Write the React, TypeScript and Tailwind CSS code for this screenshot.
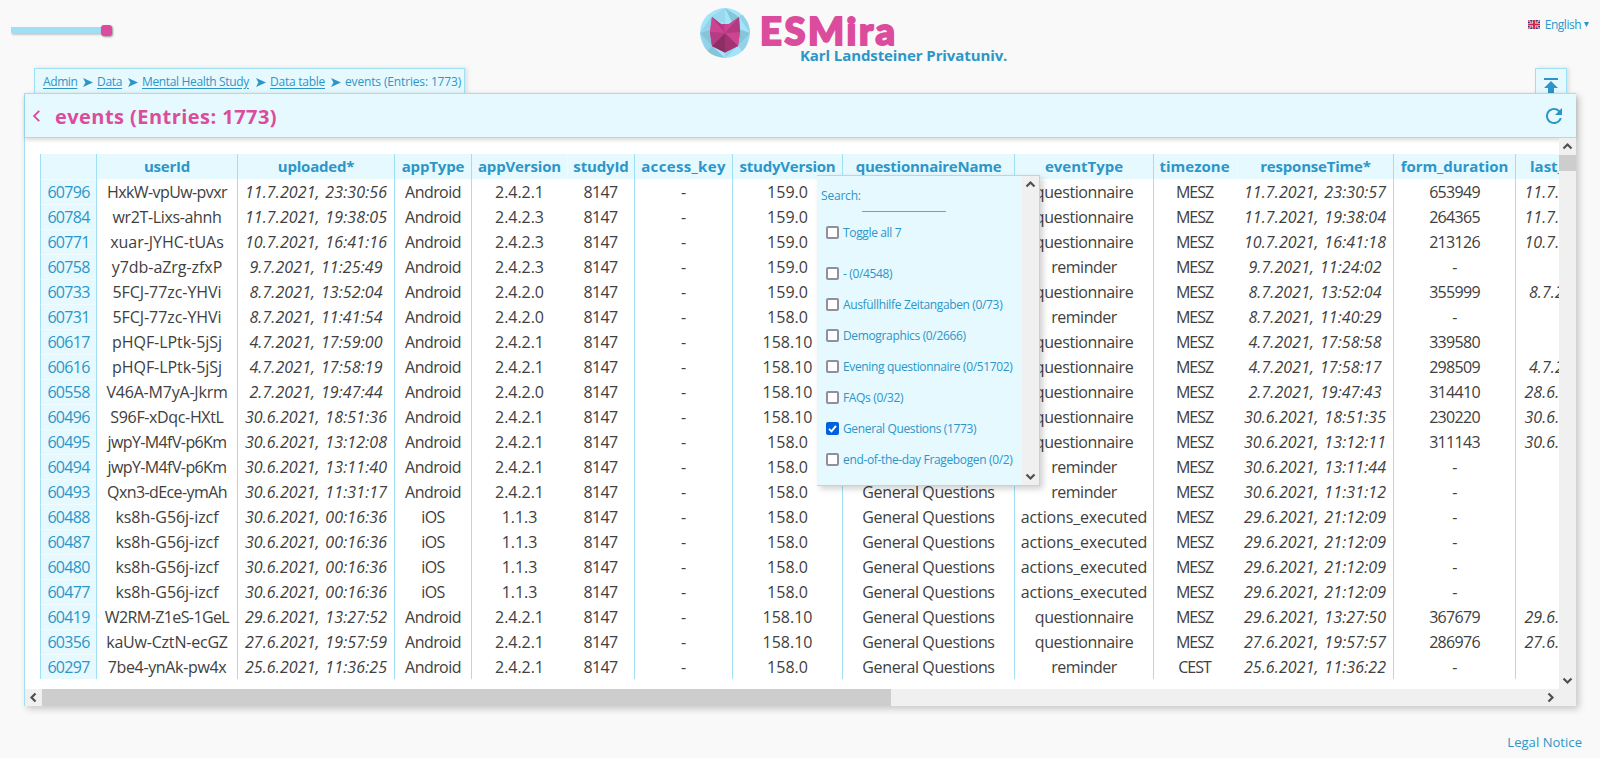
import React from "react";
import { MdRefresh } from "react-icons/md";

type Row = {
  id: string;
  user: string;
  track: string;
  uploaded: string;
  app: string;
  version: string;
  study: string;
  event: string;
  zone: string;
  response: string;
  duration: string;
  last: string;
};

const heads = [
  { name: "", w: "w-[56px]", line: true, cls: "" },
  { name: "userId", w: "w-[141px]", line: true, cls: "text-center tracking-[-0.2px]" },
  { name: "uploaded*", w: "w-[157px]", line: true, cls: "text-center tracking-[-0.2px]" },
  { name: "appType", w: "w-[77px]", line: true, cls: "text-center tracking-[-0.15px]" },
  { name: "appVersion", w: "w-[96px]", line: true, cls: "text-center tracking-[-0.15px]" },
  { name: "studyId", w: "w-[67px]", line: false, cls: "text-center tracking-[-0.15px]" },
  { name: "access_key", w: "w-[98px]", line: true, cls: "text-center tracking-[0.35px]" },
  { name: "studyVersion", w: "w-[110px]", line: true, cls: "text-center tracking-[-0.2px]" },
  { name: "questionnaireName", w: "w-[172px]", line: true, cls: "text-center tracking-[-0.25px]" },
  { name: "eventType", w: "w-[139px]", line: true, cls: "text-center tracking-[0px]" },
  { name: "timezone", w: "w-[84px]", line: true, cls: "text-center tracking-[0px] pr-0.5" },
  { name: "responseTime*", w: "w-[156px]", line: false, cls: "text-center tracking-[-0.2px]" },
  { name: "form_duration", w: "w-[122px]", line: true, cls: "text-center tracking-[-0.05px]" },
  { name: "last_invitation", w: "w-[160px]", line: true, cls: "text-left pl-[14px] tracking-[0px]" },
];

const T0 = "tracking-[-0.05px]";
const T2 = "tracking-[-0.2px]";
const T3 = "tracking-[-0.35px]";
const T6 = "tracking-[-0.6px]";

const A = "Android";
const Q = "questionnaire";
const R = "reminder";
const X = "actions_executed";

const row = (
  id: string, user: string, track: string, uploaded: string, app: string, version: string,
  study: string, event: string, response: string, duration: string, last: string, zone = "MESZ",
): Row => ({ id, user, track, uploaded, app, version, study, event, zone, response, duration, last });

const rows: Row[] = [
  row("60796", "HxkW-vpUw-pvxr", T6, "11.7.2021, 23:30:56", A, "2.4.2.1", "159.0", Q, "11.7.2021, 23:30:57", "653949", "11.7.2021, 22:30:00"),
  row("60784", "wr2T-Lixs-ahnh", T3, "11.7.2021, 19:38:05", A, "2.4.2.3", "159.0", Q, "11.7.2021, 19:38:04", "264365", "11.7.2021, 19:30:00"),
  row("60771", "xuar-JYHC-tUAs", T0, "10.7.2021, 16:41:16", A, "2.4.2.3", "159.0", Q, "10.7.2021, 16:41:18", "213126", "10.7.2021, 16:30:00"),
  row("60758", "y7db-aZrg-zfxP", T0, "9.7.2021, 11:25:49", A, "2.4.2.3", "159.0", R, "9.7.2021, 11:24:02", "-", "-"),
  row("60733", "5FCJ-77zc-YHVi", T0, "8.7.2021, 13:52:04", A, "2.4.2.0", "159.0", Q, "8.7.2021, 13:52:04", "355999", "8.7.2021, 11:40:29"),
  row("60731", "5FCJ-77zc-YHVi", T0, "8.7.2021, 11:41:54", A, "2.4.2.0", "158.0", R, "8.7.2021, 11:40:29", "-", "-"),
  row("60617", "pHQF-LPtk-5jSj", T0, "4.7.2021, 17:59:00", A, "2.4.2.1", "158.10", Q, "4.7.2021, 17:58:58", "339580", "-"),
  row("60616", "pHQF-LPtk-5jSj", T0, "4.7.2021, 17:58:19", A, "2.4.2.1", "158.10", Q, "4.7.2021, 17:58:17", "298509", "4.7.2021, 17:30:00"),
  row("60558", "V46A-M7yA-Jkrm", T2, "2.7.2021, 19:47:44", A, "2.4.2.0", "158.10", Q, "2.7.2021, 19:47:43", "314410", "28.6.2021, 19:30:00"),
  row("60496", "S96F-xDqc-HXtL", T3, "30.6.2021, 18:51:36", A, "2.4.2.1", "158.10", Q, "30.6.2021, 18:51:35", "230220", "30.6.2021, 18:30:00"),
  row("60495", "jwpY-M4fV-p6Km", T6, "30.6.2021, 13:12:08", A, "2.4.2.1", "158.0", Q, "30.6.2021, 13:12:11", "311143", "30.6.2021, 13:11:44"),
  row("60494", "jwpY-M4fV-p6Km", T6, "30.6.2021, 13:11:40", A, "2.4.2.1", "158.0", R, "30.6.2021, 13:11:44", "-", "-"),
  row("60493", "Qxn3-dEce-ymAh", T6, "30.6.2021, 11:31:17", A, "2.4.2.1", "158.0", R, "30.6.2021, 11:31:12", "-", "-"),
  row("60488", "ks8h-G56j-izcf", T0, "30.6.2021, 00:16:36", "iOS", "1.1.3", "158.0", X, "29.6.2021, 21:12:09", "-", "-"),
  row("60487", "ks8h-G56j-izcf", T0, "30.6.2021, 00:16:36", "iOS", "1.1.3", "158.0", X, "29.6.2021, 21:12:09", "-", "-"),
  row("60480", "ks8h-G56j-izcf", T0, "30.6.2021, 00:16:36", "iOS", "1.1.3", "158.0", X, "29.6.2021, 21:12:09", "-", "-"),
  row("60477", "ks8h-G56j-izcf", T0, "30.6.2021, 00:16:36", "iOS", "1.1.3", "158.0", X, "29.6.2021, 21:12:09", "-", "-"),
  row("60419", "W2RM-Z1eS-1GeL", T6, "29.6.2021, 13:27:52", A, "2.4.2.1", "158.10", Q, "29.6.2021, 13:27:50", "367679", "29.6.2021, 13:00:00"),
  row("60356", "kaUw-CztN-ecGZ", T2, "27.6.2021, 19:57:59", A, "2.4.2.1", "158.10", Q, "27.6.2021, 19:57:57", "286976", "27.6.2021, 19:30:00"),
  row("60297", "7be4-ynAk-pw4x", T3, "25.6.2021, 11:36:25", A, "2.4.2.1", "158.0", R, "25.6.2021, 11:36:22", "-", "-", "CEST"),
];

const eventTrack: Record<string, string> = {
  [Q]: "tracking-[-0.4px]",
  [R]: "tracking-[-0.5px]",
  [X]: "tracking-[-0.15px]",
};

const filters = [
  { label: "- (0/4548)", on: false },
  { label: "Ausfüllhilfe Zeitangaben (0/73)", on: false },
  { label: "Demographics (0/2666)", on: false },
  { label: "Evening questionnaire (0/51702)", on: false },
  { label: "FAQs (0/32)", on: false },
  { label: "General Questions (1773)", on: true },
  { label: "end-of-the-day Fragebogen (0/2)", on: false },
];

function Cell({ children, line = true, cls = "" }: { children?: React.ReactNode; line?: boolean; cls?: string }) {
  return (
    <td className={`${line ? "border-l border-[#a0e0f5]" : ""} p-0 pt-px text-center leading-[24px] ${cls}`}>{children}</td>
  );
}

function Chevron({ dir }: { dir: "up" | "down" | "left" | "right" }) {
  const d = {
    up: "M4.5 10.5 8.5 6.5l4 4",
    down: "M4.5 6.5l4 4 4-4",
    left: "M10.5 4.5l-4 4 4 4",
    right: "M6.5 4.5l4 4-4 4",
  }[dir];
  return (
    <svg className="block size-[17px] shrink-0" viewBox="0 0 17 17" fill="none">
      <path d={d} stroke="#505050" strokeWidth="2.2" />
    </svg>
  );
}

function CrumbArrow() {
  return (
    <svg className="mr-1 ml-1.5 h-[9px] w-[10px] shrink-0" viewBox="0 0 10 9">
      <path d="M0 0 10 4.5 0 9 2.4 4.5z" fill="#2c96c8" />
    </svg>
  );
}

function Logo() {
  return (
    <svg className="size-[50px]" viewBox="0 0 50 50">
      <clipPath id="disc"><circle cx="25" cy="25" r="25" /></clipPath>
      <g clipPath="url(#disc)">
        <path fill="#a3e4fb" d="M0 0h50v50H0z" />
        <path fill="#94d3e7" d="M25 0 39 9 50 0v25L39 9zM25 0l-14 9L0 25l11-5zM0 25l12 13L8 50zM50 25 38 38l6 8zM25 50l13-12-13 6z" />
        <path fill="#86c5d8" d="M25 0l14 9-7 5zM0 25l11-4 1 17zM50 25l-11-4-1 17zM12 38l13 12-20-4z" />
        <path fill="#98d9ee" d="M25 0 11 9l14 7z" />
      </g>
      <path fill="#c23d8a" d="M12 9l9 7h8l10-7 1 15-2 14-13 6.500L12 38l-2-14z" />
      <path fill="#cd4592" d="M12 9l13 16-15-1zM39 9 25 25V16h4zM25 25l13 13 2-14z" />
      <path fill="#b33a80" d="M12 9l9 7 4 9zM39 9l1 15-15 1z" />
      <path fill="#a03370" d="M25 25 12 38l13 6.500L38 38z" />
      <path fill="#8f2e66" d="M25 25 12 38l13 6.500z" />
      <path fill="#b83b85" d="M25 25 10 24l2 14z" />
    </svg>
  );
}

function Flag() {
  return (
    <svg className="h-[9px] w-3" viewBox="0 0 12 9">
      <path fill="#2b3a80" d="M0 0h12v9H0z" />
      <path stroke="#fff" strokeWidth="1.500" d="M0 0l12 9M12 0 0 9" />
      <path stroke="#d8213f" strokeWidth=".8" d="M0 0l12 9M12 0 0 9" />
      <path stroke="#fff" strokeWidth="3" d="M6 0v9M0 4.500h12" />
      <path stroke="#d8213f" strokeWidth="1.900" d="M6 0v9M0 4.500h12" />
    </svg>
  );
}

function Check({ on }: { on: boolean }) {
  return on ? (
    <svg className="size-[13px] shrink-0" viewBox="0 0 13 13">
      <rect width="13" height="13" rx="2" fill="#0060df" />
      <path d="M3 6.800 5.500 9.300 10 3.800" stroke="#fff" strokeWidth="1.900" fill="none" />
    </svg>
  ) : (
    <span className="size-[13px] shrink-0 rounded-[2px] border-2 border-[#8f8f9d] bg-white" />
  );
}

function FilterMenu() {
  return (
    <div className="absolute top-[37px] left-[792px] z-10 flex h-[311px] w-[223px] border-y border-r border-[#a0e0f5] bg-[#e6f9ff] text-[12px] leading-[16px] whitespace-nowrap shadow-[3px_3px_6px_rgba(0,0,0,0.18)]">
      <div className="flex w-[205px] flex-col pt-[11px]">
        <div className="flex h-[25px] pl-1">
          <span className="mr-px w-10 pt-px tracking-[-0.2px]">Search:</span>
          <span className="w-[84px] border-b border-[#dc6cae]" />
        </div>
        <div className="mt-3 mb-[18px] flex h-4 items-center gap-1 pl-[9px]">
          <Check on={false} />
          <span className="pt-px tracking-[-0.35px]">Toggle all 7</span>
        </div>
        {filters.map((f) => (
          <div key={f.label} className="flex h-[31px] items-center gap-1 pl-[9px]">
            <Check on={f.on} />
            <span className="pt-px tracking-[-0.35px]">{f.label}</span>
          </div>
        ))}
      </div>
      <div className="flex w-[17px] flex-col justify-between bg-[#f0f0f0]">
        <Chevron dir="up" />
        <Chevron dir="down" />
      </div>
    </div>
  );
}

export default function App() {
  return (
    <div className="flex h-[758px] w-[1600px] flex-col overflow-hidden bg-[#f9f9f9] font-['Open_Sans',sans-serif] text-[#2c96c8]">
      <header className="flex h-[68px] shrink-0 justify-between">
        <div className="flex w-[700px] items-center pb-[8px] pl-[11px]">
          <div className="h-[6px] w-[90px] bg-[#a0e0f5] shadow-[1px_2px_2px_rgba(0,0,0,0.2)]" />
          <div className="size-[11px] rounded-[3px] bg-[#dc4c9d] shadow-[1px_1px_2px_rgba(0,0,0,0.4)]" />
        </div>
        <div className="flex w-[320px] pt-2">
          <Logo />
          <div className="flex flex-col pl-[9px]">
            <span className="h-[38px] pl-px font-['Lato',sans-serif] text-[38px] leading-[45px] font-black tracking-[2.6px] text-[#dc4c9d] [-webkit-text-stroke:2px_#dc4c9d]">ESMira</span>
            <span className="pl-[41px] text-[15px] leading-[18px] font-bold tracking-[-0.1px] whitespace-nowrap">Karl Landsteiner Privatuniv.</span>
          </div>
        </div>
        <div className="flex h-[49px] w-[580px] items-center justify-end pr-[11px] text-[12px]">
          <Flag />
          <span className="ml-[5px] tracking-[-0.5px]">English</span>
          <svg className="ml-[3px] h-[5px] w-[5px]" viewBox="0 0 5 5"><path d="M0 0h5L2.500 5z" fill="#2c96c8" /></svg>
        </div>
      </header>

      <div className="flex h-[25px] shrink-0 justify-between pr-[33px] pl-[34px]">
        <nav className="flex w-[431px] items-center border border-b-0 border-[#a0e0f5] bg-[#e6f9ff] pt-[2px] pl-2 text-[12px] whitespace-nowrap shadow-[2px_0_4px_rgba(0,0,0,0.12)]">
          <a className="w-[34px] tracking-[-0.4px] underline underline-offset-2">Admin</a>
          <CrumbArrow />
          <a className="w-[25px] tracking-[-0.3px] underline underline-offset-2">Data</a>
          <CrumbArrow />
          <a className="w-[108px] tracking-[-0.35px] underline underline-offset-2">Mental Health Study</a>
          <CrumbArrow />
          <a className="w-[55px] tracking-[-0.25px] underline underline-offset-2">Data table</a>
          <CrumbArrow />
          <span className="tracking-[-0.15px]">events (Entries: 1773)</span>
        </nav>
        <div className="flex w-8 justify-center border border-b-0 border-[#a0e0f5] bg-[#e6f9ff] pt-[9px] shadow-[2px_0_4px_rgba(0,0,0,0.12)]">
          <svg className="h-[15px] w-[14px]" viewBox="0 0 14 15">
            <path d="M0 0h14v2H0zM7 3l7 7h-4v5H4v-5H0z" fill="#2c96c8" />
          </svg>
        </div>
      </div>

      <main className="relative ml-6 flex h-[613px] w-[1552px] shrink-0 flex-col border-l border-[#a0e0f5] bg-white shadow-[3px_3px_7px_rgba(0,0,0,0.2)]">
        <div className="relative flex h-[45px] shrink-0 items-center border-y border-[#a0e0f5] bg-[#e6f9ff] pr-[10px] pl-2 text-[#dc4c9d] shadow-[0_2px_4px_rgba(0,0,0,0.15)]">
          <svg className="h-[12px] w-[7px]" viewBox="0 0 7 12" fill="none">
            <path d="M6.200.8 1 6l5.200 5.200" stroke="#dc4c9d" strokeWidth="1.900" />
          </svg>
          <h1 className="ml-[15px] flex-1 pt-0.5 text-[20px] font-bold tracking-[0.45px]">events (Entries: 1773)</h1>
          <MdRefresh size={24} color="#2c96c8" />
        </div>

        <div className="relative flex min-h-0 flex-1">
          <div className="min-w-0 flex-1 overflow-hidden pt-4 pl-[15px]">
            <table className="w-[1635px] table-fixed border-separate border-spacing-0 text-[16px] whitespace-nowrap text-[#404040]">
              <thead>
                <tr className="h-[25px] bg-[#e6f9ff] text-[#2c96c8]">
                  {heads.map((h) => (
                    <th
                      key={h.name}
                      className={`${h.w} ${h.line ? "border-l border-[#a0e0f5]" : "border-l border-[#edfbff]"} py-0 text-[15px] leading-[25px] font-bold ${h.cls}`}
                    >
                      {h.name}
                    </th>
                  ))}
                </tr>
              </thead>
              <tbody>
                {rows.map((r) => (
                  <tr key={r.id} className="h-[25px]">
                    <td className="border-t border-l border-t-[#effbff] border-l-[#a0e0f5] bg-[#e6f9ff] p-0 text-center leading-[24px] tracking-[-0.7px] text-[#2c96c8]">{r.id}</td>
                    <Cell cls={r.track}>{r.user}</Cell>
                    <Cell cls="italic tracking-[0.1px] [word-spacing:1.5px]">{r.uploaded}</Cell>
                    <Cell cls="tracking-[-0.55px]">{r.app}</Cell>
                    <Cell cls="tracking-[-0.05px]">{r.version}</Cell>
                    <Cell line={false} cls="tracking-[-0.7px]">8147</Cell>
                    <Cell>-</Cell>
                    <Cell>{r.study}</Cell>
                    <Cell cls="tracking-[-0.38px]">General Questions</Cell>
                    <Cell cls={eventTrack[r.event]}>{r.event}</Cell>
                    <Cell cls="pr-0.5 tracking-[-1px]">{r.zone}</Cell>
                    <Cell line={false} cls="italic tracking-[0.1px] [word-spacing:1.5px]">{r.response}</Cell>
                    <Cell cls="tracking-[-0.7px]">{r.duration}</Cell>
                    <Cell cls="italic tracking-[0.1px] [word-spacing:1.5px]">{r.last}</Cell>
                  </tr>
                ))}
              </tbody>
            </table>
          </div>
          <div className="flex w-[17px] shrink-0 flex-col bg-[#f0f0f0]">
            <Chevron dir="up" />
            <div className="h-4 bg-[#cdcdcd]" />
            <div className="flex-1" />
            <Chevron dir="down" />
          </div>
          <FilterMenu />
        </div>
        <div className="flex h-[17px] shrink-0 bg-[#f0f0f0] pr-[17px]">
          <Chevron dir="left" />
          <div className="w-[849px] bg-[#cdcdcd]" />
          <div className="flex-1" />
          <Chevron dir="right" />
        </div>
      </main>

      <footer className="mt-[27px] flex justify-end pr-[18px] text-[13px] leading-[19px] font-medium">
        <a className="tracking-[0.05px]">Legal Notice</a>
      </footer>
    </div>
  );
}
